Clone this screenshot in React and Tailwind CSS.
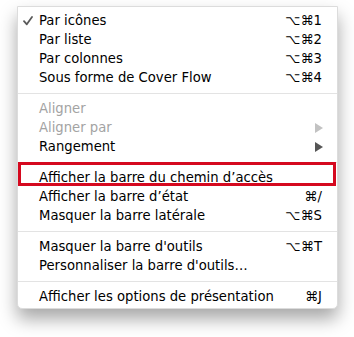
import React from 'react';

const Row = ({ label, keys, disabled, check, arrow }) => (
    <div className={`relative flex items-center h-[19px] pl-[21px] pr-[15px] ${disabled ? 'text-[#a3a3a3]' : 'text-black'}`}>
        {check && (
            <svg width="10" height="10" viewBox="0 0 10 10" className="absolute left-[5px] top-[5px]">
                <path d="M1 5.2 L3.8 8.3 L9 1" fill="none" stroke="#5a5a5a" strokeWidth="1.8" strokeLinecap="round" strokeLinejoin="round" />
            </svg>
        )}
        <span className="flex-1 whitespace-nowrap">{label}</span>
        {keys && <span className="whitespace-nowrap">{keys}</span>}
        {arrow && (
            <svg width="8" height="10" viewBox="0 0 8 10" className="mr-[-1px]">
                <path d="M0 0 L8 5 L0 10 Z" fill={disabled ? '#c2c2c2' : '#565656'} />
            </svg>
        )}
    </div>
);

const Sep = () => (
    <div className="h-[12px] flex items-center">
        <div className="h-px w-full bg-[#e3e3e3]" />
    </div>
);

export default function App() {
    return (
        <div className="w-[354px] h-[337px] bg-white pt-[6px] pl-[17px]" style={{ fontFamily: '"DejaVu Sans", sans-serif' }}>
            <div className="relative w-[321px] h-[303px] bg-white border border-[#dcdcdc] rounded-b-[5px] shadow-[0_10px_18px_rgba(0,0,0,0.35)] pt-[4px] text-[13.2px] leading-[19px]">
                <Row label="Par icônes" keys="⌥⌘1" check />
                <Row label="Par liste" keys="⌥⌘2" />
                <Row label="Par colonnes" keys="⌥⌘3" />
                <Row label="Sous forme de Cover Flow" keys="⌥⌘4" />
                <Sep />
                <Row label="Aligner" disabled />
                <Row label="Aligner par" disabled arrow />
                <Row label="Rangement" arrow />
                <Sep />
                <Row label="Afficher la barre du chemin d’accès" />
                <Row label="Afficher la barre d’état" keys="⌘/" />
                <Row label="Masquer la barre latérale" keys="⌥⌘S" />
                <Sep />
                <Row label="Masquer la barre d'outils" keys="⌥⌘T" />
                <Row label="Personnaliser la barre d'outils…" />
                <Sep />
                <Row label="Afficher les options de présentation" keys="⌘J" />

                {/* annotation box */}
                <div className="absolute left-0 top-[155px] w-[318px] h-[24px] border-[3px] border-[#d5091f]" />
            </div>
        </div>
    );
}
